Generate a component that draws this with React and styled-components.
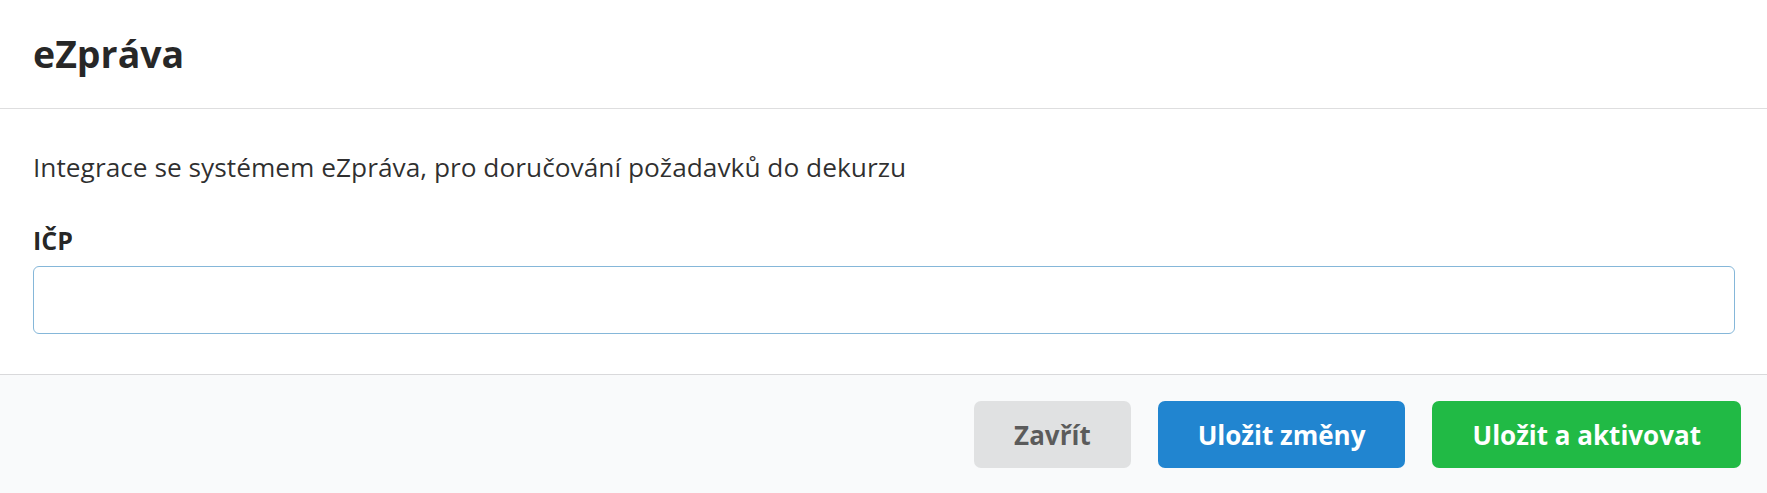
import React from "react";
import styled, { createGlobalStyle } from "styled-components";

const GlobalStyle = createGlobalStyle`
  html, body {
    margin: 0;
    padding: 0;
    background: #ffffff;
  }
  body {
    font-family: "Open Sans", "Noto Sans", "DejaVu Sans", sans-serif;
    -webkit-font-smoothing: antialiased;
  }
  * { box-sizing: border-box; }
`;

const Modal = styled.div`
  width: 1767px;
  height: 493px;
  display: flex;
  flex-direction: column;
  background: #ffffff;
  overflow: hidden;
`;

const Header = styled.div`
  height: 109px;
  display: flex;
  align-items: center;
  padding: 0 33px;
  border-bottom: 1px solid rgba(34, 36, 38, 0.15);
`;

const Title = styled.h1`
  margin: 0;
  font-size: 37.5px;
  line-height: 48px;
  font-weight: 700;
  color: rgba(0, 0, 0, 0.85);
`;

const Content = styled.div`
  padding: 40px 32px 40px 33px;
  display: flex;
  flex-direction: column;
`;

const Description = styled.p`
  margin: 0 0 40px;
  font-size: 26.3px;
  line-height: 36px;
  color: rgba(0, 0, 0, 0.82);
`;

const Field = styled.div`
  display: flex;
  flex-direction: column;
  gap: 11px;
`;

const Label = styled.label`
  font-size: 25px;
  line-height: 30px;
  font-weight: 700;
  color: rgba(0, 0, 0, 0.87);
`;

const Input = styled.input`
  height: 68px;
  width: 100%;
  margin: 0;
  padding: 0 20px;
  border: 1px solid #85b7d9;
  border-radius: 6px;
  font-family: inherit;
  font-size: 26px;
  color: rgba(0, 0, 0, 0.8);
  background: #ffffff;
  outline: none;
`;

const Actions = styled.div`
  flex: 1;
  display: flex;
  justify-content: flex-end;
  align-items: flex-start;
  gap: 27px;
  padding: 26px 26px 0;
  background: #f9fafb;
  border-top: 1px solid rgba(34, 36, 38, 0.15);
`;

const variants = {
  basic: { bg: "#e0e1e2", fg: "rgba(0, 0, 0, 0.6)" },
  primary: { bg: "#2185d0", fg: "#ffffff" },
  positive: { bg: "#21ba45", fg: "#ffffff" },
};

const Button = styled.button`
  height: 67px;
  padding: 0 40px;
  border: none;
  border-radius: 7px;
  font-family: inherit;
  font-size: 26px;
  font-weight: 700;
  line-height: 1;
  cursor: pointer;
  background: ${(p) => variants[p.$variant].bg};
  color: ${(p) => variants[p.$variant].fg};
`;

export default function App() {
  return (
    <>
      <GlobalStyle />
      <Modal>
        <Header>
          <Title>eZpráva</Title>
        </Header>
        <Content>
          <Description>
            Integrace se systémem eZpráva, pro doručování požadavků do dekurzu
          </Description>
          <Field>
            <Label htmlFor="icp">IČP</Label>
            <Input id="icp" type="text" />
          </Field>
        </Content>
        <Actions>
          <Button $variant="basic">Zavřít</Button>
          <Button $variant="primary">Uložit změny</Button>
          <Button $variant="positive">Uložit a aktivovat</Button>
        </Actions>
      </Modal>
    </>
  );
}
